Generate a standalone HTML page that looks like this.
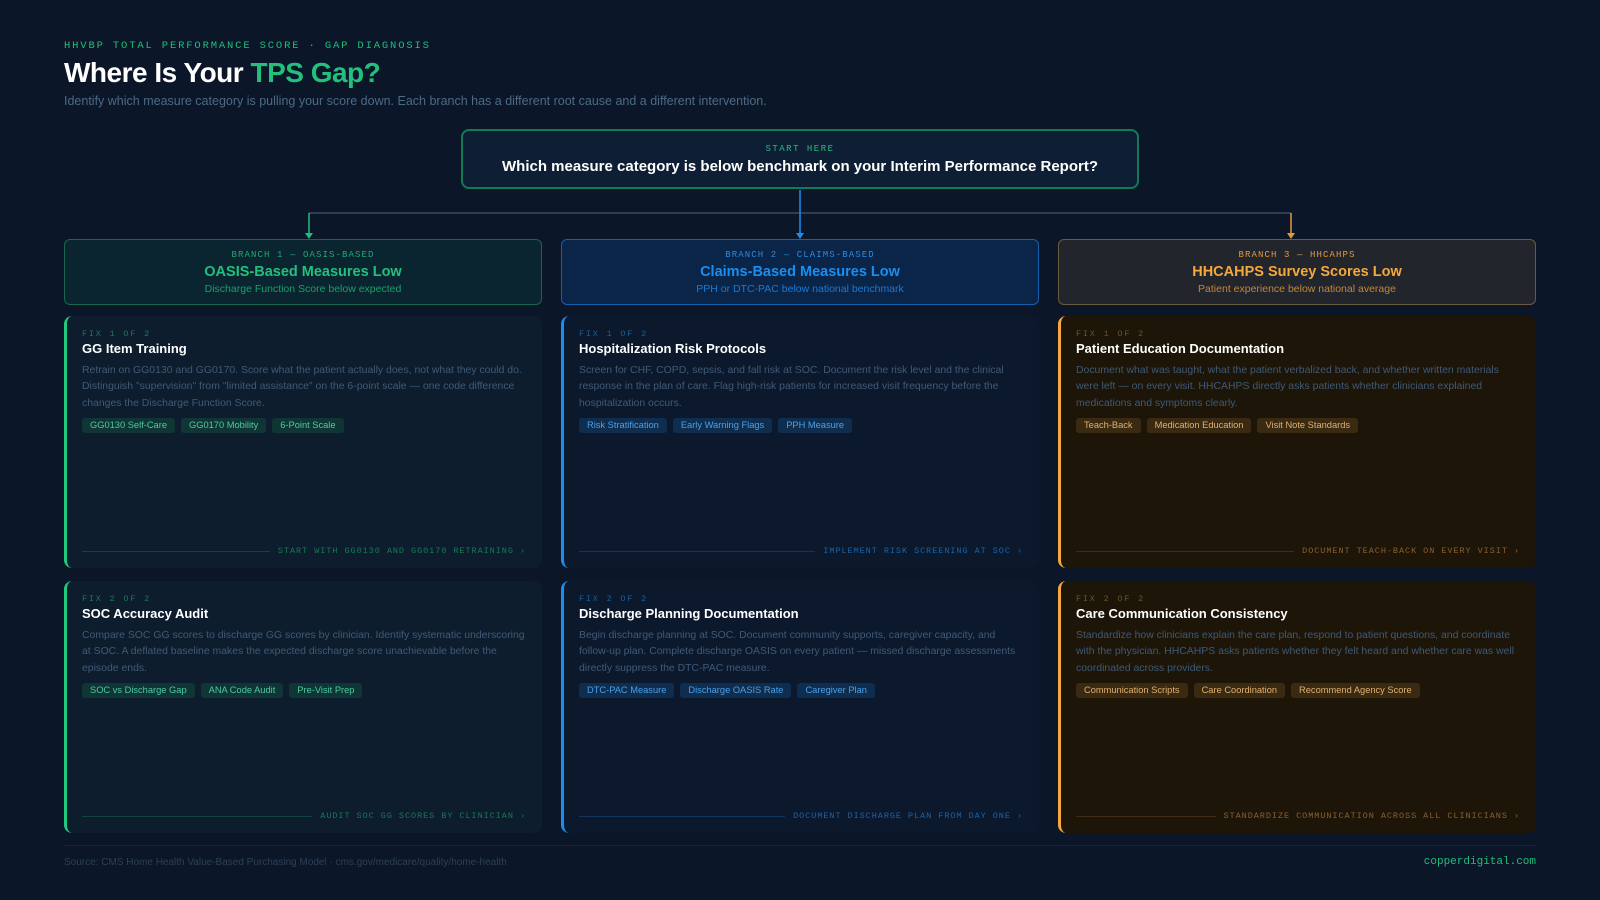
<!DOCTYPE html>
<html><head><meta charset="utf-8"><style>
*{box-sizing:border-box;margin:0;padding:0}
body{width:1600px;height:900px;background:#0b1628;font-family:"Liberation Sans",sans-serif;position:relative;overflow:hidden}
.mono{font-family:"Liberation Mono",monospace}
.eb{position:absolute;left:64px;top:40px;font-size:10.5px;letter-spacing:1.85px;color:#1fbf7a}
h1{position:absolute;left:64px;top:57px;font-size:28px;font-weight:bold;color:#fff;letter-spacing:-0.5px}
h1 span{color:#22c07c}
.sub{position:absolute;left:64px;top:94px;font-size:12.5px;color:#4d6a85}
.start{position:absolute;left:461px;top:129px;width:678px;height:60px;border:2px solid #137a55;border-radius:8px;background:#0e1f35;text-align:center}
.start .l{font-size:9px;letter-spacing:1.5px;color:#1fbf7a;margin-top:13px}
.start .q{font-size:15px;font-weight:bold;color:#fff;margin-top:4px}
.grid{position:absolute;left:64px;top:239px;width:1472px;display:grid;grid-template-columns:478px 478px 478px;column-gap:19px}
.hd{height:66px;border:1px solid;border-radius:6px;text-align:center}
.hd .b{font-size:9px;letter-spacing:1.1px;margin-top:10px}
.hd .t{font-size:14.5px;font-weight:bold;margin-top:4px}
.hd .s{font-size:10.5px;margin-top:3px}
.card{position:relative;height:252px;border-radius:8px;margin-top:11px;border-left:3px solid;padding:13px 15px 0 15px}
.card+.card{margin-top:13px}
.fx{font-size:8.5px;letter-spacing:1.8px}
.ct{font-size:13px;font-weight:bold;color:#fff;margin-top:2px}
.bd{font-size:10.45px;line-height:16.3px;color:#3f5a78;margin-top:7px}
.tags{margin-top:6px;display:flex;gap:6px}
.tg{font-size:9.3px;padding:2px 8px;border-radius:3px;height:15px;line-height:11px}
.cta{position:absolute;left:15px;right:16px;bottom:12px;display:flex;align-items:center;font-size:8.5px;letter-spacing:0.95px}
.cta i{flex:1;height:1px;margin-right:8px}
.g .hd{background:#0b2530;border-color:#17664c}.g .b{color:#1fa874}.g .t{color:#22c07c}.g .s{color:#1a9e6c}
.g .card{background:#0d1d2d;border-color:#1fc97f}.g .fx{color:#177a58}.g .tg{background:#0f3535;color:#4fc9a0}.g .cta{color:#167a58}.g .cta i{background:#14433f}
.bl .hd{background:#0b2548;border-color:#1660b0}.bl .b{color:#2a8ae0}.bl .t{color:#1a8ef0}.bl .s{color:#1e78d0}
.bl .card{background:#0c192c;border-color:#1a8ef0}.bl .fx{color:#1a5e9a}.bl .tg{background:#0f2d4f;color:#4aa0e8}.bl .cta{color:#1a63a8}.bl .cta i{background:#13345c}
.o .hd{background:#22252c;border-color:#6a5a3e}.o .b{color:#e09a3a}.o .t{color:#f5a83c}.o .s{color:#c08840}
.o .card{background:#1c1508;border-color:#f5a83c}.o .fx{color:#6b5430}.o .tg{background:#3a2a12;color:#e0b070}.o .cta{color:#8a6030}.o .cta i{background:#3e2c14}
.foot{position:absolute;left:64px;top:845px;width:1472px;border-top:1px solid #17253a}
.src{position:absolute;left:64px;top:857px;font-size:10px;color:#2c4058}
.cd{position:absolute;right:64px;top:856px;font-size:11px;color:#1fbf7a}
</style></head><body>
<div class="eb mono">HHVBP TOTAL PERFORMANCE SCORE · GAP DIAGNOSIS</div>
<h1>Where Is Your <span>TPS Gap?</span></h1>
<div class="sub">Identify which measure category is pulling your score down. Each branch has a different root cause and a different intervention.</div>
<div class="start"><div class="l mono">START HERE</div><div class="q">Which measure category is below benchmark on your Interim Performance Report?</div></div>
<svg style="position:absolute;left:0;top:0" width="1600" height="245">
<path d="M309 213H1291" stroke="#3a4a5c" stroke-width="1.5" fill="none"/>
<path d="M800 190V234" stroke="#1a8ef0" stroke-width="1.5"/>
<path d="M309 213V234" stroke="#1fbf7a" stroke-width="1.5"/>
<path d="M1291 213V234" stroke="#e09a3a" stroke-width="1.5"/>
<path d="M305 233l4 6 4-6z" fill="#1fbf7a"/><path d="M796 233l4 6 4-6z" fill="#1a8ef0"/><path d="M1287 233l4 6 4-6z" fill="#e09a3a"/>
</svg>
<div class="grid">
<div class="g">
<div class="hd"><div class="b mono">BRANCH 1 — OASIS-BASED</div><div class="t">OASIS-Based Measures Low</div><div class="s">Discharge Function Score below expected</div></div>
<div class="card"><div class="fx mono">FIX 1 OF 2</div><div class="ct">GG Item Training</div><div class="bd">Retrain on GG0130 and GG0170. Score what the patient actually does, not what they could do. Distinguish "supervision" from "limited assistance" on the 6-point scale — one code difference changes the Discharge Function Score.</div><div class="tags"><span class="tg">GG0130 Self-Care</span><span class="tg">GG0170 Mobility</span><span class="tg">6-Point Scale</span></div><div class="cta mono"><i></i>START WITH GG0130 AND GG0170 RETRAINING ›</div></div>
<div class="card"><div class="fx mono">FIX 2 OF 2</div><div class="ct">SOC Accuracy Audit</div><div class="bd">Compare SOC GG scores to discharge GG scores by clinician. Identify systematic underscoring at SOC. A deflated baseline makes the expected discharge score unachievable before the episode ends.</div><div class="tags"><span class="tg">SOC vs Discharge Gap</span><span class="tg">ANA Code Audit</span><span class="tg">Pre-Visit Prep</span></div><div class="cta mono"><i></i>AUDIT SOC GG SCORES BY CLINICIAN ›</div></div>
</div>
<div class="bl">
<div class="hd"><div class="b mono">BRANCH 2 — CLAIMS-BASED</div><div class="t">Claims-Based Measures Low</div><div class="s">PPH or DTC-PAC below national benchmark</div></div>
<div class="card"><div class="fx mono">FIX 1 OF 2</div><div class="ct">Hospitalization Risk Protocols</div><div class="bd">Screen for CHF, COPD, sepsis, and fall risk at SOC. Document the risk level and the clinical response in the plan of care. Flag high-risk patients for increased visit frequency before the hospitalization occurs.</div><div class="tags"><span class="tg">Risk Stratification</span><span class="tg">Early Warning Flags</span><span class="tg">PPH Measure</span></div><div class="cta mono"><i></i>IMPLEMENT RISK SCREENING AT SOC ›</div></div>
<div class="card"><div class="fx mono">FIX 2 OF 2</div><div class="ct">Discharge Planning Documentation</div><div class="bd">Begin discharge planning at SOC. Document community supports, caregiver capacity, and follow-up plan. Complete discharge OASIS on every patient — missed discharge assessments directly suppress the DTC-PAC measure.</div><div class="tags"><span class="tg">DTC-PAC Measure</span><span class="tg">Discharge OASIS Rate</span><span class="tg">Caregiver Plan</span></div><div class="cta mono"><i></i>DOCUMENT DISCHARGE PLAN FROM DAY ONE ›</div></div>
</div>
<div class="o">
<div class="hd"><div class="b mono">BRANCH 3 — HHCAHPS</div><div class="t">HHCAHPS Survey Scores Low</div><div class="s">Patient experience below national average</div></div>
<div class="card"><div class="fx mono">FIX 1 OF 2</div><div class="ct">Patient Education Documentation</div><div class="bd">Document what was taught, what the patient verbalized back, and whether written materials were left — on every visit. HHCAHPS directly asks patients whether clinicians explained medications and symptoms clearly.</div><div class="tags"><span class="tg">Teach-Back</span><span class="tg">Medication Education</span><span class="tg">Visit Note Standards</span></div><div class="cta mono"><i></i>DOCUMENT TEACH-BACK ON EVERY VISIT ›</div></div>
<div class="card"><div class="fx mono">FIX 2 OF 2</div><div class="ct">Care Communication Consistency</div><div class="bd">Standardize how clinicians explain the care plan, respond to patient questions, and coordinate with the physician. HHCAHPS asks patients whether they felt heard and whether care was well coordinated across providers.</div><div class="tags"><span class="tg">Communication Scripts</span><span class="tg">Care Coordination</span><span class="tg">Recommend Agency Score</span></div><div class="cta mono"><i></i>STANDARDIZE COMMUNICATION ACROSS ALL CLINICIANS ›</div></div>
</div>
</div>
<div class="foot"></div>
<div class="src">Source: CMS Home Health Value-Based Purchasing Model · cms.gov/medicare/quality/home-health</div>
<div class="cd mono">copperdigital.com</div>
</body></html>
